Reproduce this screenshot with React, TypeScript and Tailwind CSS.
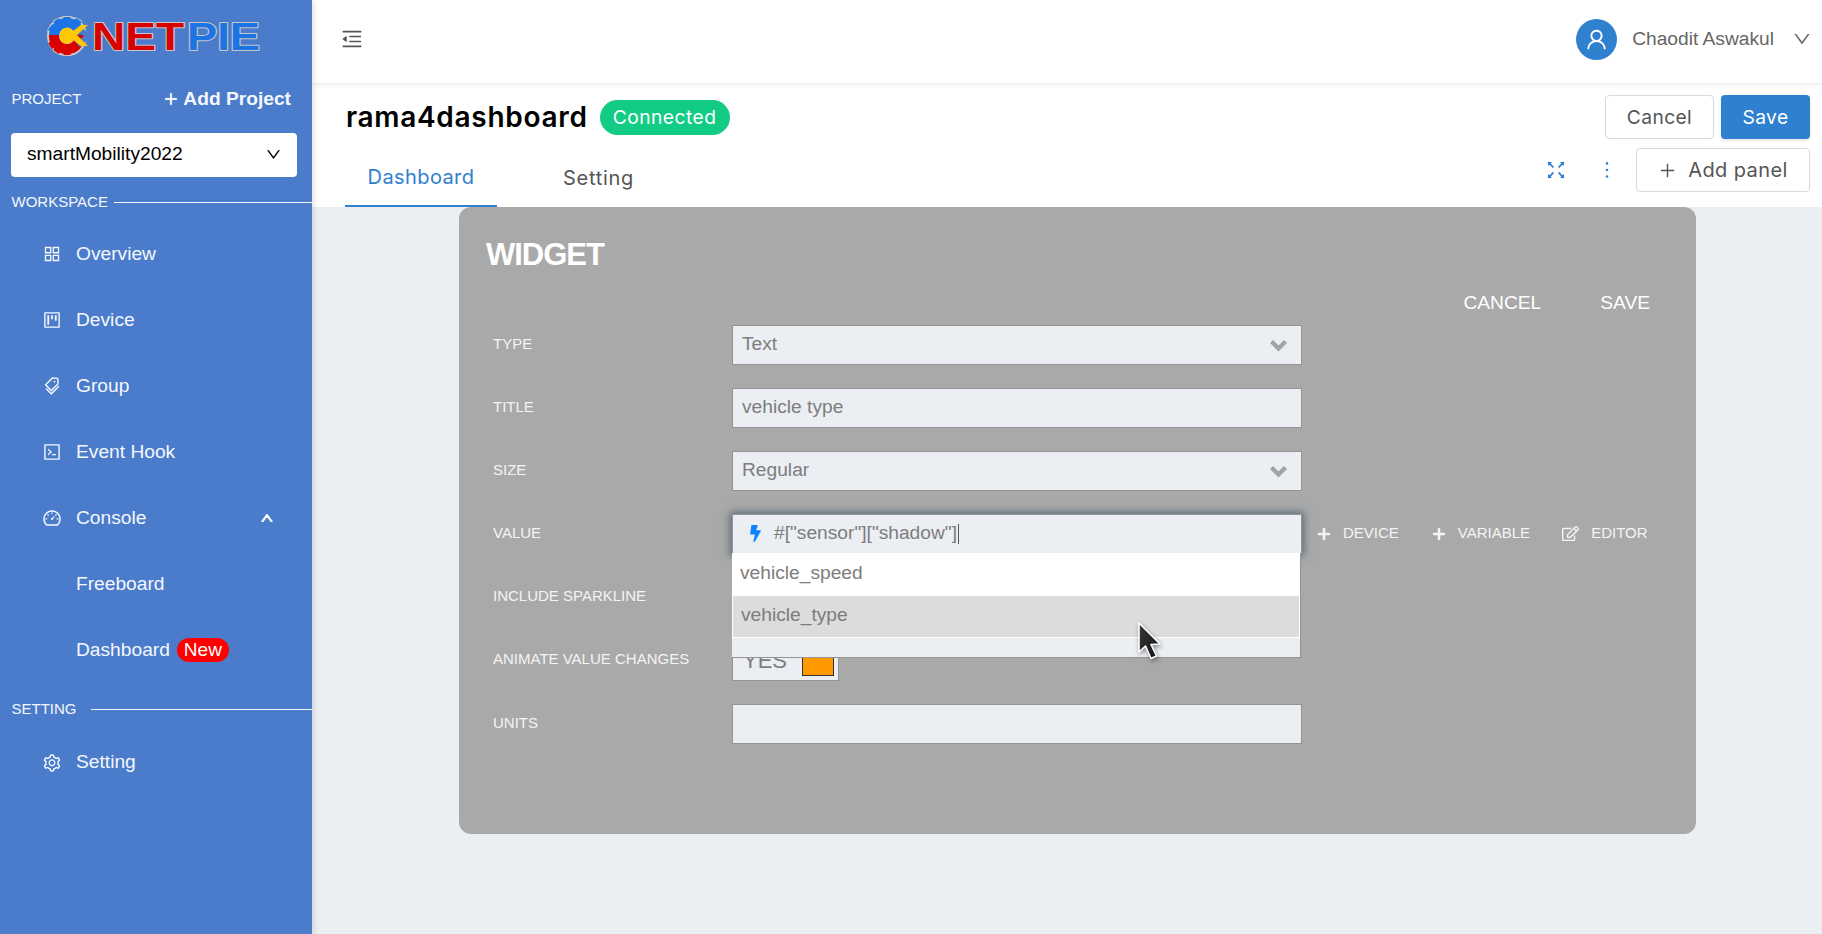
import React from "react";
import {
  AiOutlineAppstore,
  AiOutlineProject,
  AiOutlineTags,
  AiOutlineCode,
  AiOutlineDashboard,
  AiOutlineSetting,
  AiOutlineMenuFold,
  AiOutlineDown,
  AiOutlineUser,
  AiOutlineFullscreen,
  AiOutlineMore,
  AiOutlinePlus,
  AiOutlineUp,
} from "react-icons/ai";
import { FaBolt, FaPlus, FaRegEdit } from "react-icons/fa";

function Logo() {
  const textProps = {
    fontFamily: "'Liberation Sans', sans-serif",
    fontWeight: 700,
    fontSize: 39,
    stroke: "#c8c8c8",
    strokeWidth: 2,
    strokeLinejoin: "round",
    paintOrder: "stroke",
    lengthAdjust: "spacingAndGlyphs",
  } as const;
  return (
    <svg width="216" height="44" viewBox="0 0 216 44" className="block">
      <defs>
        <clipPath id="logoTop"><rect x="0" y="0" width="46" height="20" /></clipPath>
        <clipPath id="logoBottom"><rect x="0" y="20" width="46" height="24" /></clipPath>
      </defs>
      <g fill="none" stroke="#c8c8c8" strokeWidth="14">
        <circle cx="21" cy="21" r="13" />
      </g>
      <g stroke="#c8c8c8" strokeWidth="8">
        <path d="M21 1V7M21 35V41M3 12L8 15M4 31L9 28M10 4L13 9M33 4L30 9M10 38L13 33" />
      </g>
      <g fill="none" stroke="#1c74e4" strokeWidth="10" clipPath="url(#logoTop)">
        <circle cx="21" cy="21" r="13" />
        <path d="M21 2V7M4 12L8 15M10 5L13 9M33 5L30 9" strokeWidth="7" />
      </g>
      <g fill="none" stroke="#d90000" strokeWidth="10" clipPath="url(#logoBottom)">
        <circle cx="21" cy="21" r="13" />
        <path d="M21 35V40M4 31L9 28M10 37L13 33M31 36L28 32" strokeWidth="7" />
      </g>
      <path d="M46 21L34 11L30 15L38 21L30 28L34 32Z" fill="#4a7ccb" />
      <path d="M14 20A7 7 0 0 1 27 16L35 10L42 10L31 20L42 31L35 31L27 25A7 7 0 0 1 14 20Z" fill="#ffc800" />
      <text x="46" y="35" textLength="92" fill="#d90000" {...textProps}>NET</text>
      <text x="141" y="35" textLength="73" fill="#1c74e4" {...textProps}>PIE</text>
    </svg>
  );
}

function NavItem({ icon, label, extra }: { icon?: React.ReactNode; label: string; extra?: React.ReactNode }) {
  return (
    <div className="flex h-[66px] items-center pl-[42px] text-[19.2px] text-[#f4f7fc]">
      <span className="flex w-[34px] justify-start text-[20px]">{icon}</span>
      <span>{label}</span>
      {extra}
    </div>
  );
}

function SectionLabel({ label, gap }: { label: string; gap: string }) {
  return (
    <div className="flex items-center pl-[11.5px] text-[15px] text-[#f4f7fc]">
      <span>{label}</span>
      <span className={`h-px flex-1 bg-[#f4f7fc] ${gap}`} />
    </div>
  );
}

function Sidebar() {
  return (
    <aside className="relative z-20 flex h-full w-[312px] shrink-0 flex-col bg-[#4a7ccb] shadow-[2px_0_6px_rgba(0,0,0,0.12)]">
      <div className="pl-[46px] pt-[15px]"><Logo /></div>
      <div className="mt-[26px] flex items-center justify-between pl-[11.5px] pr-[21px] text-white">
        <span className="text-[15px] text-[#f4f7fc]">PROJECT</span>
        <span className="flex items-center text-[19.2px] font-bold text-[#f4f7fc]">
          <AiOutlinePlus className="mr-[4px] text-[16px]" strokeWidth={60} />
          Add Project
        </span>
      </div>
      <div className="ml-[11px] mr-[15px] mt-[19px] flex h-[44px] items-center justify-between rounded-[4px] bg-white pl-[16px] pr-[15px] text-[19.2px] text-black">
        <span>smartMobility2022</span>
        <AiOutlineDown className="text-[17px]" />
      </div>
      <div className="mt-[14px]"><SectionLabel label="WORKSPACE" gap="ml-[6px]" /></div>
      <div className="mt-[8px]">
        <NavItem icon={<AiOutlineAppstore />} label="Overview" />
        <NavItem icon={<AiOutlineProject />} label="Device" />
        <NavItem icon={<AiOutlineTags />} label="Group" />
        <NavItem icon={<AiOutlineCode />} label="Event Hook" />
        <NavItem
          icon={<AiOutlineDashboard />}
          label="Console"
          extra={<span className="ml-[114px] text-[14px]"><AiOutlineUp strokeWidth={80} /></span>}
        />
        <NavItem label="Freeboard" />
        <NavItem
          label="Dashboard"
          extra={<span className="ml-[7px] flex h-[24px] w-[52px] items-center justify-center rounded-full bg-[#ff0000] text-[19px] text-white">New</span>}
        />
      </div>
      <div className="mt-[15px]"><SectionLabel label="SETTING" gap="ml-[14px]" /></div>
      <div className="mt-[9px]"><NavItem icon={<AiOutlineSetting />} label="Setting" /></div>
    </aside>
  );
}

function TopBar() {
  return (
    <header className="relative z-10 flex h-[83px] shrink-0 items-center justify-between bg-white pb-[5px] pl-[28px] pr-[10px] shadow-[0_1px_4px_rgba(0,0,0,0.1)]">
      <AiOutlineMenuFold className="text-[24px] text-[#555]" />
      <div className="flex items-center">
        <span className="flex h-[41px] w-[41px] items-center justify-center rounded-full bg-[#3080d0] text-[25px] text-white"><AiOutlineUser /></span>
        <span className="ml-[15px] text-[19.2px] text-[#666]">Chaodit Aswakul</span>
        <AiOutlineDown className="ml-[18px] text-[20px] text-[#666]" />
      </div>
    </header>
  );
}

const mont = "font-['Inter','Open_Sans',sans-serif]";

function PageHeader() {
  return (
    <div className={`flex h-[124px] shrink-0 justify-between bg-white pl-[33px] pr-[12px] ${mont}`}>
      <div className="flex flex-col">
        <div className="mt-[13px] flex items-center">
          <span className="ml-[1px] text-[28px] font-semibold tracking-[0.7px] text-black">rama4dashboard</span>
          <span className="ml-[12px] flex h-[35px] w-[130px] items-center justify-center rounded-full bg-[#12cc86] text-[19.2px] tracking-[0.5px] text-white">Connected</span>
        </div>
        <div className="mt-[auto] flex">
          <div className="flex h-[54px] w-[152px] items-center justify-center border-b-2 border-[#3080d0] pb-[4px] text-[20px] tracking-[0.4px] text-[#3080d0]">Dashboard</div>
          <div className="ml-[66px] flex h-[54px] items-center pb-[4px] text-[20px] tracking-[0.7px] text-[#555]">Setting</div>
        </div>
      </div>
      <div className="flex flex-col items-end pt-[12px]">
        <div className="flex gap-[7px]">
          <div className="flex h-[44px] w-[109px] items-center justify-center rounded-[4px] border border-[#d9d9d9] text-[19.2px] tracking-[0.4px] text-[#555]">Cancel</div>
          <div className="flex h-[44px] w-[89px] items-center justify-center rounded-[4px] bg-[#3080d0] text-[19.2px] tracking-[0.4px] text-white shadow-[0_2px_3px_rgba(0,0,0,0.1)]">Save</div>
        </div>
        <div className="mt-[9px] flex items-center">
          <AiOutlineFullscreen className="text-[24px] text-[#3080d0]" />
          <AiOutlineMore className="ml-[27px] text-[24px] text-[#3080d0]" />
          <div className="ml-[17px] flex h-[44px] w-[174px] items-center justify-center rounded-[4px] border border-[#d9d9d9] text-[20px] tracking-[0.4px] text-[#555]">
            <AiOutlinePlus className="mr-[11px] text-[19px]" />
            Add panel
          </div>
        </div>
      </div>
    </div>
  );
}

const inputBox = "flex h-[40px] w-[570px] items-center border border-[#949494] bg-[#ebeef3] px-[9px] text-[19.2px] text-[#7d7d7d]";

function Row({ label, children }: { label: string; children?: React.ReactNode }) {
  return (
    <div className="flex h-[63px] items-center">
      <span className="w-[239px] shrink-0 text-[15px] text-[#f4f4f4]">{label}</span>
      {children}
    </div>
  );
}

function Action({ icon, label, ml }: { icon: React.ReactNode; label: string; ml: string }) {
  return (
    <span className={`flex items-center text-[15px] text-[#f4f4f4] ${ml}`}>
      <span className="mr-[12px] text-[14px]">{icon}</span>
      {label}
    </span>
  );
}

function SelectChevron() {
  return (
    <svg width="19" height="14" viewBox="0 0 19 14" className="ml-auto mr-[4px]">
      <path d="M2.5 3.5L9.5 10.5L16.5 3.5" fill="none" stroke="#a3a3a3" strokeWidth="4.4" />
    </svg>
  );
}

function Widget() {
  return (
    <section className="relative ml-[147px] h-[627px] w-[1237px] rounded-[12px] bg-[#a9a9a9] font-['Liberation_Sans',sans-serif]">
      <div className="pl-[27px] pt-[31px] text-[31px] font-bold leading-[34px] tracking-[-1px] text-white">WIDGET</div>
      <div className="mt-[19px] flex h-[24px] items-center justify-end gap-[59px] pr-[46px] text-[19.2px] text-white">
        <span>CANCEL</span>
        <span>SAVE</span>
      </div>
      <div className="-mt-[2px] pl-[34px]">
        <Row label="TYPE"><div className={inputBox}>Text<SelectChevron /></div></Row>
        <Row label="TITLE"><div className={inputBox}>vehicle type</div></Row>
        <Row label="SIZE"><div className={inputBox}>Regular<SelectChevron /></div></Row>
        <Row label="VALUE">
          <div className="relative z-10">
            <div className={`${inputBox} h-[39px] pl-[14px] shadow-[0_0_8px_2px_rgba(60,85,105,0.75)]`}>
              <FaBolt className="mr-[10px] text-[17px] text-[#0a84ff]" />
              <span>#["sensor"]["shadow"]</span>
              <span className="ml-[1px] h-[20px] w-px bg-[#555]" />
            </div>
            <div className="absolute left-0 top-[39px] h-[105px] w-[569px] border-b border-r border-[#949494] bg-[#ebeef3] text-[19.2px] text-[#7d7d7d]">
              <div className="flex h-[42px] items-center bg-white pb-px pl-[8px]">vehicle_speed</div>
              <div className="flex h-[43px] items-center border border-white bg-[#dcdcdc] pb-px pl-[8px]">vehicle_type</div>
            </div>
          </div>
          <Action icon={<FaPlus />} label="DEVICE" ml="ml-[15px]" />
          <Action icon={<FaPlus />} label="VARIABLE" ml="ml-[33px]" />
          <Action icon={<FaRegEdit className="text-[17px]" />} label="EDITOR" ml="ml-[32px]" />
        </Row>
        <Row label="INCLUDE SPARKLINE" />
        <Row label="ANIMATE VALUE CHANGES">
          <div className="mt-[2px] flex h-[41px] w-[107px] items-end border border-[#949494] bg-[#ebeef3] pb-[4px] pl-[10px] text-[22px] leading-[26px] text-[#7d7d7d]">
            <span className="mb-[2px]">YES</span>
            <span className="ml-[15px] block h-[28px] w-[32px] border border-[#333] bg-[#ff9900]" />
          </div>
        </Row>
        <div className="mt-[1px]">
          <Row label="UNITS"><div className={`${inputBox} w-[569px]`} /></Row>
        </div>
      </div>
      <svg width="26" height="40" viewBox="0 0 26 40" className="absolute left-[678px] top-[414px] z-20 drop-shadow-[1px_2px_2px_rgba(0,0,0,0.4)]">
        <defs>
          <linearGradient id="cursorFill" x1="0" y1="0" x2="1" y2="1">
            <stop offset="0" stopColor="#3a3a3a" />
            <stop offset="1" stopColor="#111" />
          </linearGradient>
        </defs>
        <path d="M2 2V31L8.5 25L14 37.5L19.5 35L14 23.5L23 23Z" fill="url(#cursorFill)" stroke="#fff" strokeWidth="1.6" strokeLinejoin="round" />
      </svg>
    </section>
  );
}

export default function App() {
  return (
    <div className="flex h-[934px] w-[1822px] overflow-hidden bg-[#ebeef3] font-['Liberation_Sans',sans-serif]">
      <Sidebar />
      <main className="flex min-w-0 flex-1 flex-col">
        <TopBar />
        <PageHeader />
        <Widget />
      </main>
    </div>
  );
}
